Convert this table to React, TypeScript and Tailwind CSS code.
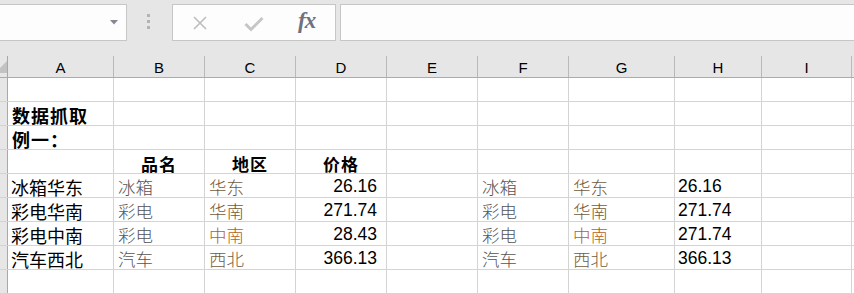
import React from "react";

const CJK_SANS = "font-['Microsoft_YaHei','Noto_Sans_CJK_SC',sans-serif]";

type Cell = {
  text?: string;
  kind?: "title" | "head" | "name" | "item" | "region" | "regionHot" | "num" | "numLeft";
};

// column widths include each cell's right gridline
const COLS = "grid-cols-[8px_106px_91px_91px_91px_91px_91px_106px_87px_90px_1fr]";
const LETTERS = ["A", "B", "C", "D", "E", "F", "G", "H", "I", ""];

const rows: Cell[][] = [
  [],
  [{ text: "数据抓取", kind: "title" }],
  [{ text: "例一：", kind: "title" }],
  [{}, { text: "品名", kind: "head" }, { text: "地区", kind: "head" }, { text: "价格", kind: "head" }],
  [
    { text: "冰箱华东", kind: "name" },
    { text: "冰箱", kind: "item" },
    { text: "华东", kind: "region" },
    { text: "26.16", kind: "num" },
    {},
    { text: "冰箱", kind: "item" },
    { text: "华东", kind: "region" },
    { text: "26.16", kind: "numLeft" },
  ],
  [
    { text: "彩电华南", kind: "name" },
    { text: "彩电", kind: "item" },
    { text: "华南", kind: "region" },
    { text: "271.74", kind: "num" },
    {},
    { text: "彩电", kind: "item" },
    { text: "华南", kind: "region" },
    { text: "271.74", kind: "numLeft" },
  ],
  [
    { text: "彩电中南", kind: "name" },
    { text: "彩电", kind: "item" },
    { text: "中南", kind: "regionHot" },
    { text: "28.43", kind: "num" },
    {},
    { text: "彩电", kind: "item" },
    { text: "中南", kind: "regionHot" },
    { text: "271.74", kind: "numLeft" },
  ],
  [
    { text: "汽车西北", kind: "name" },
    { text: "汽车", kind: "item" },
    { text: "西北", kind: "region" },
    { text: "366.13", kind: "num" },
    {},
    { text: "汽车", kind: "item" },
    { text: "西北", kind: "region" },
    { text: "366.13", kind: "numLeft" },
  ],
  [],
];

function CellView({ cell }: { cell?: Cell }) {
  const base = "h-full border-r border-[#d4d4d4] flex items-center overflow-visible whitespace-nowrap";
  if (!cell || !cell.text) return <div className={base} />;
  switch (cell.kind) {
    case "title":
      return (
        <div className={`${base} pl-[4px] pt-[2px]`}>
          <span className={`${CJK_SANS} font-bold text-[18px] leading-none text-black tracking-[1px]`}>{cell.text}</span>
        </div>
      );
    case "head":
      return (
        <div className={`${base} justify-center pt-[3px]`}>
          <span className={`${CJK_SANS} font-bold text-[17px] leading-none text-black tracking-[1px]`}>{cell.text}</span>
        </div>
      );
    case "name":
      return (
        <div className={`${base} pl-[3px] pt-[2px]`}>
          <span className={`${CJK_SANS} text-[18px] leading-none text-black`}>{cell.text}</span>
        </div>
      );
    case "item":
      return (
        <div className={`${base} pl-[4px] pt-[3px]`}>
          <span className={`${CJK_SANS} font-light text-[17.5px] leading-none text-[#555555]`}>{cell.text}</span>
        </div>
      );
    case "region":
      return (
        <div className={`${base} pl-[4px] pt-[3px]`}>
          <span className={`${CJK_SANS} font-light text-[17.5px] leading-none text-[#725b3b]`}>{cell.text}</span>
        </div>
      );
    case "regionHot":
      return (
        <div className={`${base} pl-[4px] pt-[3px]`}>
          <span className={`${CJK_SANS} font-light text-[17.5px] leading-none text-[#b9601f]`}>{cell.text}</span>
        </div>
      );
    case "num":
      return (
        <div className={`${base} justify-end pr-[9px] pt-[2px]`}>
          <span className="font-['Liberation_Sans',Arial,sans-serif] text-[17.5px] leading-none text-black">{cell.text}</span>
        </div>
      );
    case "numLeft":
      return (
        <div className={`${base} pl-[3px] pt-[2px]`}>
          <span className="font-['Liberation_Sans',Arial,sans-serif] text-[17.5px] leading-none text-black">{cell.text}</span>
        </div>
      );
  }
  return <div className={base} />;
}

function Toolbar() {
  return (
    <div className="h-[56px] bg-[#e6e6e6] flex items-start pt-[4px]">
      {/* name box */}
      <div className="w-[127px] h-[37px] bg-[#fdfdfd] border border-l-0 border-[#c6c6c6] flex items-center justify-end pr-[8px]">
        <svg width="8" height="5" viewBox="0 0 8 5" className="mb-[1px]">
          <polygon points="0,0 8,0 4,4.5" fill="#8a8592" />
        </svg>
      </div>
      {/* grip */}
      <div className="ml-[20px] mt-[10px] flex flex-col gap-[3px]">
        <div className="w-[3px] h-[3px] bg-[#b3b3b3]" />
        <div className="w-[3px] h-[3px] bg-[#b3b3b3]" />
        <div className="w-[3px] h-[3px] bg-[#b3b3b3]" />
      </div>
      {/* cancel / enter / function */}
      <div className="ml-[22px] w-[164px] h-[37px] bg-[#fdfdfd] border border-[#c6c6c6] relative">
        <svg width="16" height="16" viewBox="0 0 16 16" className="absolute left-[19px] top-[10px]">
          <path d="M2 2 L14 14 M14 2 L2 14" stroke="#bdbdbd" strokeWidth="1.6" fill="none" />
        </svg>
        <svg width="20" height="16" viewBox="0 0 20 16" className="absolute left-[71px] top-[11px]">
          <path d="M1.5 8 L7 13.5 L18.5 2" stroke="#c6c6c6" strokeWidth="3" fill="none" />
        </svg>
        <span className="absolute left-[125px] top-[4px] font-['Liberation_Serif',serif] italic font-bold text-[23px] leading-none text-[#6f7080] tracking-[-1px]">
          fx
        </span>
      </div>
      {/* formula input */}
      <div className="ml-[4px] flex-1 h-[37px] bg-[#fdfdfd] border border-r-0 border-[#c6c6c6]" />
    </div>
  );
}

export default function App() {
  return (
    <div className="w-[854px] h-[294px] overflow-hidden bg-white">
      <Toolbar />
      {/* column headers */}
      <div className={`grid ${COLS} h-[22px] bg-[#e6e6e6] border-b border-[#ababab]`}>
        <div className="relative border-r border-[#a8a8a8] overflow-hidden">
          <svg width="8" height="21" viewBox="0 0 8 21" className="absolute left-0 top-0">
            <polygon points="7,5 7,17 -5,17" fill="#c2c2c2" />
          </svg>
        </div>
        {LETTERS.map((l, i) => (
          <div
            key={i}
            className={`flex items-center justify-center pt-[2px] font-['Liberation_Sans',Arial,sans-serif] text-[15px] leading-none text-black ${
              l ? "border-r border-[#b9b9b9]" : ""
            }`}
          >
            {l}
          </div>
        ))}
      </div>
      {/* sheet rows */}
      {rows.map((row, r) => (
        <div key={r} className={`grid ${COLS} h-[24px] border-b border-[#d4d4d4]`}>
          <div className="bg-[#e6e6e6] border-r border-[#a8a8a8]" />
          {Array.from({ length: 9 }).map((_, c) => (
            <CellView key={c} cell={row[c]} />
          ))}
          <div />
        </div>
      ))}
    </div>
  );
}
